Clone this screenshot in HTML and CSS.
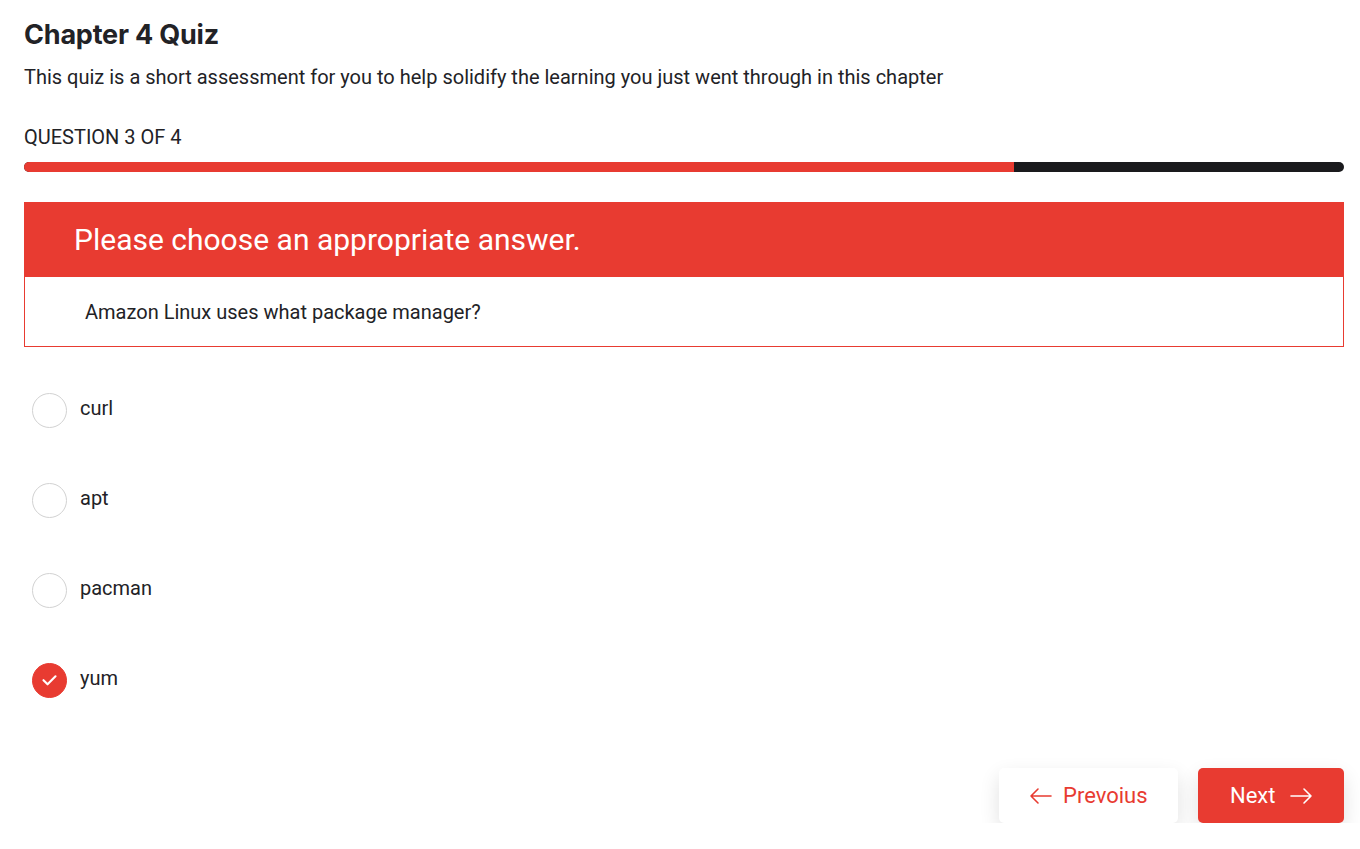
FILE: index.html
```html
<!DOCTYPE html>
<html>
<head>
<meta charset="utf-8">
<link rel="stylesheet" href="styles.css">
</head>
<body>
<main class="quiz">
  <h1 class="title">Chapter 4 Quiz</h1>
  <p class="intro">This quiz is a short assessment for you to help solidify the learning you just went through in this chapter</p>
  <div class="counter">QUESTION 3 OF 4</div>
  <div class="progress"><div class="progress-fill" style="width:75%"></div></div>

  <section class="card">
    <div class="card-head">Please choose an appropriate answer.</div>
    <div class="card-body">Amazon Linux uses what package manager?</div>
  </section>

  <ul class="options">
    <li class="option"><span class="radio"></span><span class="label">curl</span></li>
    <li class="option"><span class="radio"></span><span class="label">apt</span></li>
    <li class="option"><span class="radio"></span><span class="label">pacman</span></li>
    <li class="option selected"><span class="radio"><svg viewBox="0 0 34 34" width="34" height="34"><path d="M10.8 17.2l4.2 4.2 8.2-8.2" fill="none" stroke="#fff" stroke-width="2.2" stroke-linecap="round" stroke-linejoin="round"/></svg></span><span class="label">yum</span></li>
  </ul>

  <div class="actions">
    <button class="btn btn-prev"><svg width="24" height="24" viewBox="0 0 24 24"><path d="M22 12H2M9 5l-7 7 7 7" fill="none" stroke="currentColor" stroke-width="1.6" stroke-linecap="round" stroke-linejoin="round"/></svg>Prevoius</button>
    <button class="btn btn-next">Next<svg width="24" height="24" viewBox="0 0 24 24"><path d="M2 12h20M15 5l7 7-7 7" fill="none" stroke="currentColor" stroke-width="1.6" stroke-linecap="round" stroke-linejoin="round"/></svg></button>
  </div>
</main>
</body>
</html>
```

FILE: styles.css
```css
* { box-sizing: border-box; }
html, body { margin: 0; padding: 0; background: #fff; }
body { font-family: Roboto, "Liberation Sans", sans-serif; color: #222226; }

.quiz { padding: 18px 16px 0 24px; }

.title {
  font-family: Inter, "Liberation Sans", sans-serif;
  font-weight: 700;
  font-size: 27px;
  line-height: 34px;
  margin: 0;
  color: #222226;
  letter-spacing: -0.2px;
}

.intro {
  font-size: 20px;
  line-height: 26px;
  margin: 12px 0 0;
}

.counter {
  font-size: 20px;
  line-height: 26px;
  margin-top: 34px;
}

.progress {
  margin-top: 12px;
  height: 10px;
  border-radius: 5px;
  background: #1a1a1d;
  overflow: hidden;
}
.progress-fill { height: 100%; background: #e83b31; }

.card { margin-top: 30px; }
.card-head {
  background: #e83b31;
  color: #fff;
  font-size: 30px;
  line-height: 75px;
  height: 75px;
  padding-left: 50px;
}
.card-body {
  border: 1px solid #e83b31;
  border-top: none;
  height: 70px;
  padding-left: 60px;
  display: flex;
  align-items: center;
  font-size: 20px;
}

.options {
  list-style: none;
  margin: 46px 0 0;
  padding: 0 0 0 8px;
  display: flex;
  flex-direction: column;
  gap: 56px;
}
.option {
  display: flex;
  align-items: center;
  height: 34px;
  font-size: 20px;
}
.label { position: relative; top: -2px; }
.radio {
  width: 35px;
  height: 35px;
  border: 1px solid #d2d2d2;
  border-radius: 50%;
  margin-right: 13px;
  display: flex;
  align-items: center;
  justify-content: center;
  flex-shrink: 0;
}
.selected .radio { background: #e83b31; border-color: #e83b31; }

.actions {
  display: flex;
  justify-content: flex-end;
  gap: 20px;
  margin-top: 71px;
}
.btn {
  font-family: Roboto, "Liberation Sans", sans-serif;
  font-size: 22px;
  height: 55px;
  border: none;
  border-radius: 5px;
  display: flex;
  align-items: center;
  gap: 10px;
  padding: 0 30px;
  box-shadow: 0 8px 20px rgba(0,0,0,0.12);
  cursor: pointer;
}
.btn-prev { background: #fff; color: #e83b31; width: 179px; }
.btn-next { background: #e83b31; color: #fff; width: 146px; padding-left: 32px; gap: 14px; }
```
